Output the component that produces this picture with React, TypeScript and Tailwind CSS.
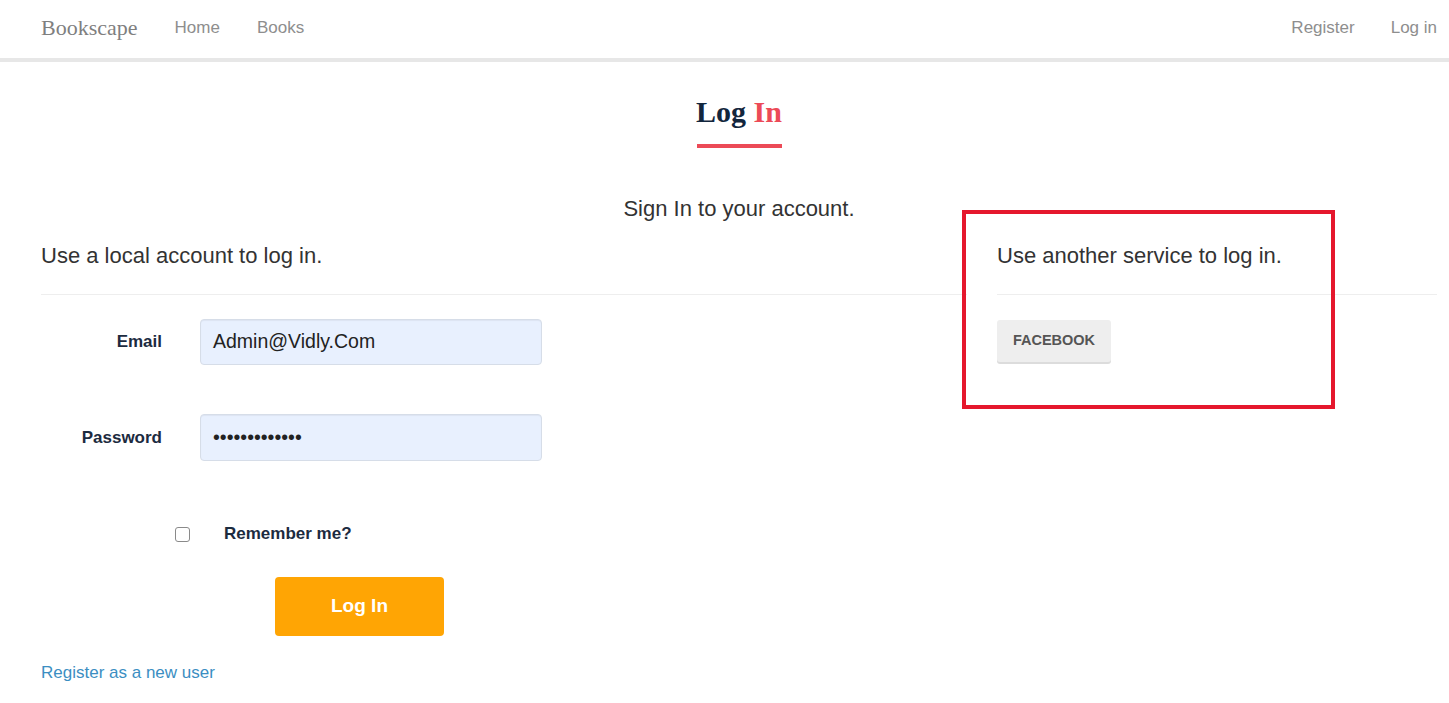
import React from 'react';

const sans = { fontFamily: '"Liberation Sans", Arial, sans-serif' };

function Navbar() {
  return (
    <nav className="h-[62px] bg-white border-b-4 border-[#e7e7e7] flex items-center pl-[41px] pr-[12px] pb-[2px]">
      <span className="text-[22px] text-[#7f7f7f] font-['Liberation_Serif',serif] leading-none">Bookscape</span>
      <span className="ml-[37px] text-[17px] text-[#8e8e8e]">Home</span>
      <span className="ml-[37px] text-[17px] text-[#8e8e8e]">Books</span>
      <div className="ml-auto flex items-center gap-[36px] text-[17px] text-[#8e8e8e]">
        <span>Register</span>
        <span>Log in</span>
      </div>
    </nav>
  );
}

export default function App() {
  return (
    <div className="min-h-screen bg-white relative" style={sans}>
      <Navbar />

      <div className="flex flex-col items-center pl-[29px]">
        <h1 className="mt-[32px] text-[30px] leading-[36px] font-bold font-['Liberation_Serif',serif]">
          <span className="text-[#13263d]">Log </span>
          <span className="text-[#ec4a57]">In</span>
        </h1>
        <div className="mt-[14px] w-[85px] h-[4px] bg-[#ec4a57]" />
        <p className="mt-[48px] text-[22px] leading-[26px] text-[#333]">Sign In to your account.</p>
      </div>

      <div className="flex pl-[41px] pr-[12px] mt-[21px]">
        {/* local account */}
        <section className="w-[926px]">
          <h4 className="text-[22px] leading-[26px] text-[#333]">Use a local account to log in.</h4>
          <hr className="mt-[25px] border-t border-[#eeeeee]" />

          <div className="mt-[24px] flex items-center">
            <label className="w-[121px] text-right text-[17px] font-bold text-[#1c2b3f]">Email</label>
            <div className="ml-[38px] w-[342px] h-[46px] rounded-[4px] bg-[#e8f0fe] border border-[#d6dde8] shadow-[inset_0_1px_1px_rgba(0,0,0,0.05)] flex items-center px-[12px] text-[19.5px] text-[#222]">
              Admin@Vidly.Com
            </div>
          </div>

          <div className="mt-[49px] flex items-center">
            <label className="w-[121px] text-right text-[17px] font-bold text-[#1c2b3f]">Password</label>
            <div className="ml-[38px] w-[342px] h-[47px] rounded-[4px] bg-[#e8f0fe] border border-[#d6dde8] shadow-[inset_0_1px_1px_rgba(0,0,0,0.05)] flex items-center px-[12px] text-[19.5px] text-[#222]">
              •••••••••••••
            </div>
          </div>

          <div className="mt-[61px] h-[24px] flex items-center">
            <span className="ml-[134px] w-[15px] h-[15px] rounded-[3px] border border-[#8a8a8a] bg-white" />
            <span className="ml-[34px] text-[17px] font-bold text-[#1c2b3f]">Remember me?</span>
          </div>

          <button className="mt-[31px] ml-[234px] w-[169px] h-[59px] rounded-[4px] bg-[#ffa504] text-white text-[19px] font-bold">
            Log In
          </button>

          <div className="mt-[27px] text-[17px] leading-[20px] text-[#3b8ec2]">Register as a new user</div>
        </section>

        {/* external services */}
        <section className="ml-[30px] flex-1">
          <h4 className="text-[22px] leading-[26px] text-[#333]">Use another service to log in.</h4>
          <hr className="mt-[25px] border-t border-[#eeeeee]" />
          <button className="mt-[25px] w-[114px] h-[42px] rounded-[3px] bg-[#eeeeee] shadow-[0_2px_0_#dcdcdc] text-[14.5px] font-bold text-[#555]">
            FACEBOOK
          </button>
        </section>
      </div>

      {/* annotation box */}
      <div className="absolute left-[962px] top-[210px] w-[373px] h-[199px] border-4 border-[#e5172d] pointer-events-none" />
    </div>
  );
}
